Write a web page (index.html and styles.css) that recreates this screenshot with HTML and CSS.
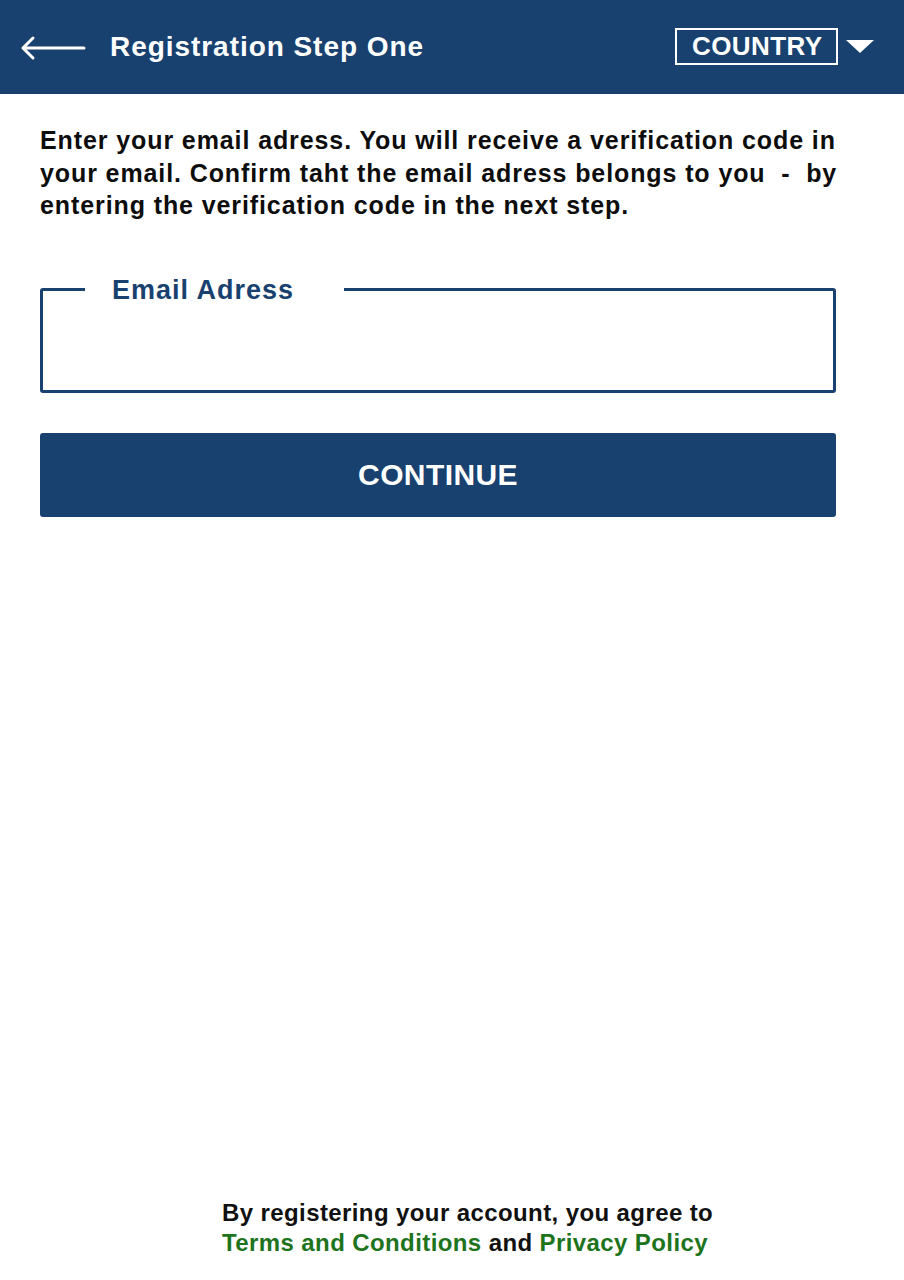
FILE: index.html
```html
<!DOCTYPE html>
<html lang="en">
<head>
<meta charset="utf-8">
<title>Registration Step One</title>
<link rel="stylesheet" href="styles.css">
</head>
<body>
<div class="page">
  <header class="topbar">
    <div class="topbar-left">
      <svg class="back" width="66" height="26" viewBox="0 0 66 26" aria-hidden="true">
        <path d="M3 13 H64 M13 3 L3 13 L13 23" fill="none" stroke="#fff" stroke-width="3" stroke-linecap="round" stroke-linejoin="round"/>
      </svg>
      <h1 class="title">Registration Step One</h1>
    </div>
    <div class="country">
      <span class="country-box">COUNTRY</span>
      <svg class="caret" width="28" height="13" viewBox="0 0 28 13" aria-hidden="true">
        <path d="M0 0 H28 L14 13 Z" fill="#fff"/>
      </svg>
    </div>
  </header>

  <main class="content">
    <p class="intro">Enter your email adress. You will receive a verification code in your email. Confirm taht the email adress belongs to you&nbsp; -&nbsp; by entering the verification code in the next step.</p>

    <fieldset class="field">
      <legend class="field-label">Email Adress</legend>
      <input class="field-input" type="email" aria-label="Email Adress">
    </fieldset>

    <button class="continue" type="button">CONTINUE</button>
  </main>

  <footer class="footer">
    <p class="terms">By registering your account, you agree to<br><a class="link" href="#">Terms and Conditions</a> and <a class="link" href="#">Privacy Policy</a></p>
  </footer>
</div>
</body>
</html>
```

FILE: styles.css
```css
* { box-sizing: border-box; }

html, body {
  margin: 0;
  padding: 0;
  background: #ffffff;
}

body {
  font-family: "Liberation Sans", Arial, sans-serif;
  font-weight: bold;
  color: #111111;
}

.page {
  width: 904px;
  height: 1280px;
  display: flex;
  flex-direction: column;
}

.topbar {
  height: 94px;
  background: #18416f;
  display: flex;
  align-items: center;
  justify-content: space-between;
  padding: 0 30px 0 20px;
}

.topbar-left {
  display: flex;
  align-items: center;
  gap: 24px;
}

.back { display: block; margin-top: 2px; }

.title {
  margin: 0;
  color: #ffffff;
  font-size: 28px;
  font-weight: bold;
  letter-spacing: 0.95px;
}

.country {
  display: flex;
  align-items: center;
  gap: 8px;
  margin-top: -2px;
}

.country-box {
  display: block;
  border: 2px solid #ffffff;
  color: #ffffff;
  font-size: 26px;
  line-height: 33px;
  letter-spacing: 0.4px;
  padding: 0 12px 0 15px;
  width: 163px;
}

.caret { display: block; margin-top: 1px; }

.content {
  padding: 0 68px 0 40px;
  display: flex;
  flex-direction: column;
}

.intro {
  margin: 30px -20px 0 0;
  font-size: 25px;
  line-height: 32.5px;
  letter-spacing: 0.9px;
  color: #0d0d0d;
}

.field {
  margin: 53px 0 0;
  padding: 0;
  height: 118px;
  border: 3px solid #18416f;
  border-radius: 3px;
  min-width: 0;
}

.field-label {
  margin-left: 42px;
  padding: 0 50px 0 27px;
  color: #18416f;
  font-size: 27px;
  line-height: 30px;
  letter-spacing: 1px;
}

.field-input {
  display: block;
  width: 100%;
  height: 80px;
  border: 0;
  outline: none;
  background: transparent;
  font-family: inherit;
  font-size: 24px;
  padding: 0 20px;
}

.continue {
  margin-top: 40px;
  height: 84px;
  border: 0;
  border-radius: 3px;
  background: #18416f;
  color: #ffffff;
  font-family: "Liberation Sans", Arial, sans-serif;
  font-weight: bold;
  font-size: 30px;
  letter-spacing: 0.4px;
  cursor: pointer;
}

.footer {
  margin-top: auto;
  padding: 0 0 22px 222px;
}

.terms {
  margin: 0;
  font-size: 24px;
  line-height: 30px;
  letter-spacing: 0.4px;
  color: #111111;
}

.link {
  color: #1e741c;
  text-decoration: none;
}
```
